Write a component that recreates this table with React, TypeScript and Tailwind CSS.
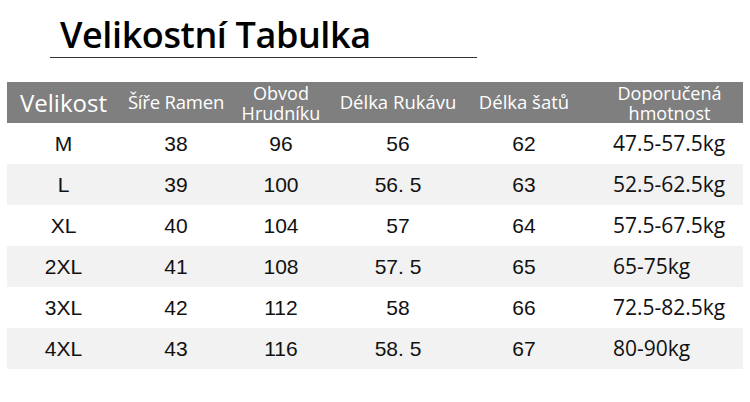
const rows = [
  { size: 'M', shoulder: '38', chest: '96', sleeve: '56', length: '62', weight: '47.5-57.5kg' },
  { size: 'L', shoulder: '39', chest: '100', sleeve: '56. 5', length: '63', weight: '52.5-62.5kg' },
  { size: 'XL', shoulder: '40', chest: '104', sleeve: '57', length: '64', weight: '57.5-67.5kg' },
  { size: '2XL', shoulder: '41', chest: '108', sleeve: '57. 5', length: '65', weight: '65-75kg' },
  { size: '3XL', shoulder: '42', chest: '112', sleeve: '58', length: '66', weight: '72.5-82.5kg' },
  { size: '4XL', shoulder: '43', chest: '116', sleeve: '58. 5', length: '67', weight: '80-90kg' },
];

const cols = 'grid grid-cols-[113px_112px_98px_136px_116px_161px]';

export default function App() {
  return (
    <div className="w-[750px] h-[402px] bg-white pt-[17px] overflow-hidden">
      <h1 className="pl-[60px] h-[36px] text-[36px] leading-[36px] font-semibold text-black font-['Open_Sans',sans-serif] tracking-[-0.4px]">
        Velikostní Tabulka
      </h1>
      <div className="ml-[50px] mt-[4px] w-[427px] h-px bg-[#333]" />

      <div className="ml-[7px] mt-[24px] w-[736px]">
        <div className={`${cols} h-[41px] bg-[#7f7f7f] text-white font-['Open_Sans',sans-serif] items-center text-center`}>
          <div className="text-[24px] leading-none">Velikost</div>
          <div className="text-[18.5px] leading-none tracking-[-0.2px]">Šíře Ramen</div>
          <div className="flex flex-col text-[18px] leading-[20px]">
            <span>Obvod</span>
            <span>Hrudníku</span>
          </div>
          <div className="text-[18.5px] leading-none">Délka Rukávu</div>
          <div className="text-[18.5px] leading-none">Délka šatů</div>
          <div className="flex flex-col text-[18px] leading-[20px] pl-[14px]">
            <span>Doporučená</span>
            <span>hmotnost</span>
          </div>
        </div>
        {rows.map((r, i) => (
          <div
            key={r.size}
            className={`${cols} h-[41px] items-center text-[21px] text-[#111] ${i % 2 === 1 ? 'bg-[#f2f2f2]' : 'bg-white'}`}
          >
            <div className="text-center font-['Liberation_Sans',sans-serif]">{r.size}</div>
            <div className="text-center font-['Liberation_Sans',sans-serif]">{r.shoulder}</div>
            <div className="text-center font-['Liberation_Sans',sans-serif]">{r.chest}</div>
            <div className="text-center font-['Liberation_Sans',sans-serif]">{r.sleeve}</div>
            <div className="text-center font-['Liberation_Sans',sans-serif]">{r.length}</div>
            <div className="pl-[31px] font-['Open_Sans',sans-serif] text-[21px]">{r.weight}</div>
          </div>
        ))}
      </div>
    </div>
  );
}
